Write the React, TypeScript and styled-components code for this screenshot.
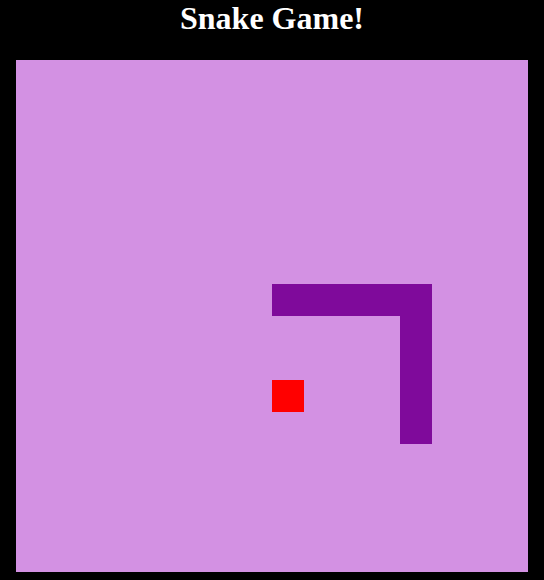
import React from 'react'
import styled, { createGlobalStyle } from 'styled-components'

const GRID = 16
const CELL = 32

const snake: [number, number][] = [
  [8, 7],
  [9, 7],
  [10, 7],
  [11, 7],
  [12, 7],
  [12, 8],
  [12, 9],
  [12, 10],
  [12, 11],
]
const food: [number, number] = [8, 10]

const App: React.FC = () => {
  return (
    <>
      <GlobalStyle />
      <StyledPage>
        <Title>Snake Game!</Title>
        <Board>
          {snake.map(([x, y], i) => (
            <Cell key={i} $x={x} $y={y} $color="#7f0a9b" />
          ))}
          <Cell $x={food[0]} $y={food[1]} $color="#ff0000" />
        </Board>
      </StyledPage>
    </>
  )
}

const GlobalStyle = createGlobalStyle`
  html, body {
    margin: 0;
    background: #000;
  }
`

const StyledPage = styled.div`
  display: flex;
  flex-direction: column;
  align-items: center;
  width: 544px;
  height: 580px;
  background: #000;
`

const Title = styled.h1`
  margin: 0;
  font-family: 'Liberation Serif', 'Times New Roman', serif;
  font-size: 32px;
  font-weight: bold;
  color: #fff;
  line-height: 37px;
`

const Board = styled.div`
  display: grid;
  grid-template-columns: repeat(${GRID}, ${CELL}px);
  grid-template-rows: repeat(${GRID}, ${CELL}px);
  margin-top: 23px;
  background: #d391e3;
`

const Cell = styled.div<{ $x: number; $y: number; $color: string }>`
  grid-column: ${(p) => p.$x + 1};
  grid-row: ${(p) => p.$y + 1};
  background: ${(p) => p.$color};
`

export default App
